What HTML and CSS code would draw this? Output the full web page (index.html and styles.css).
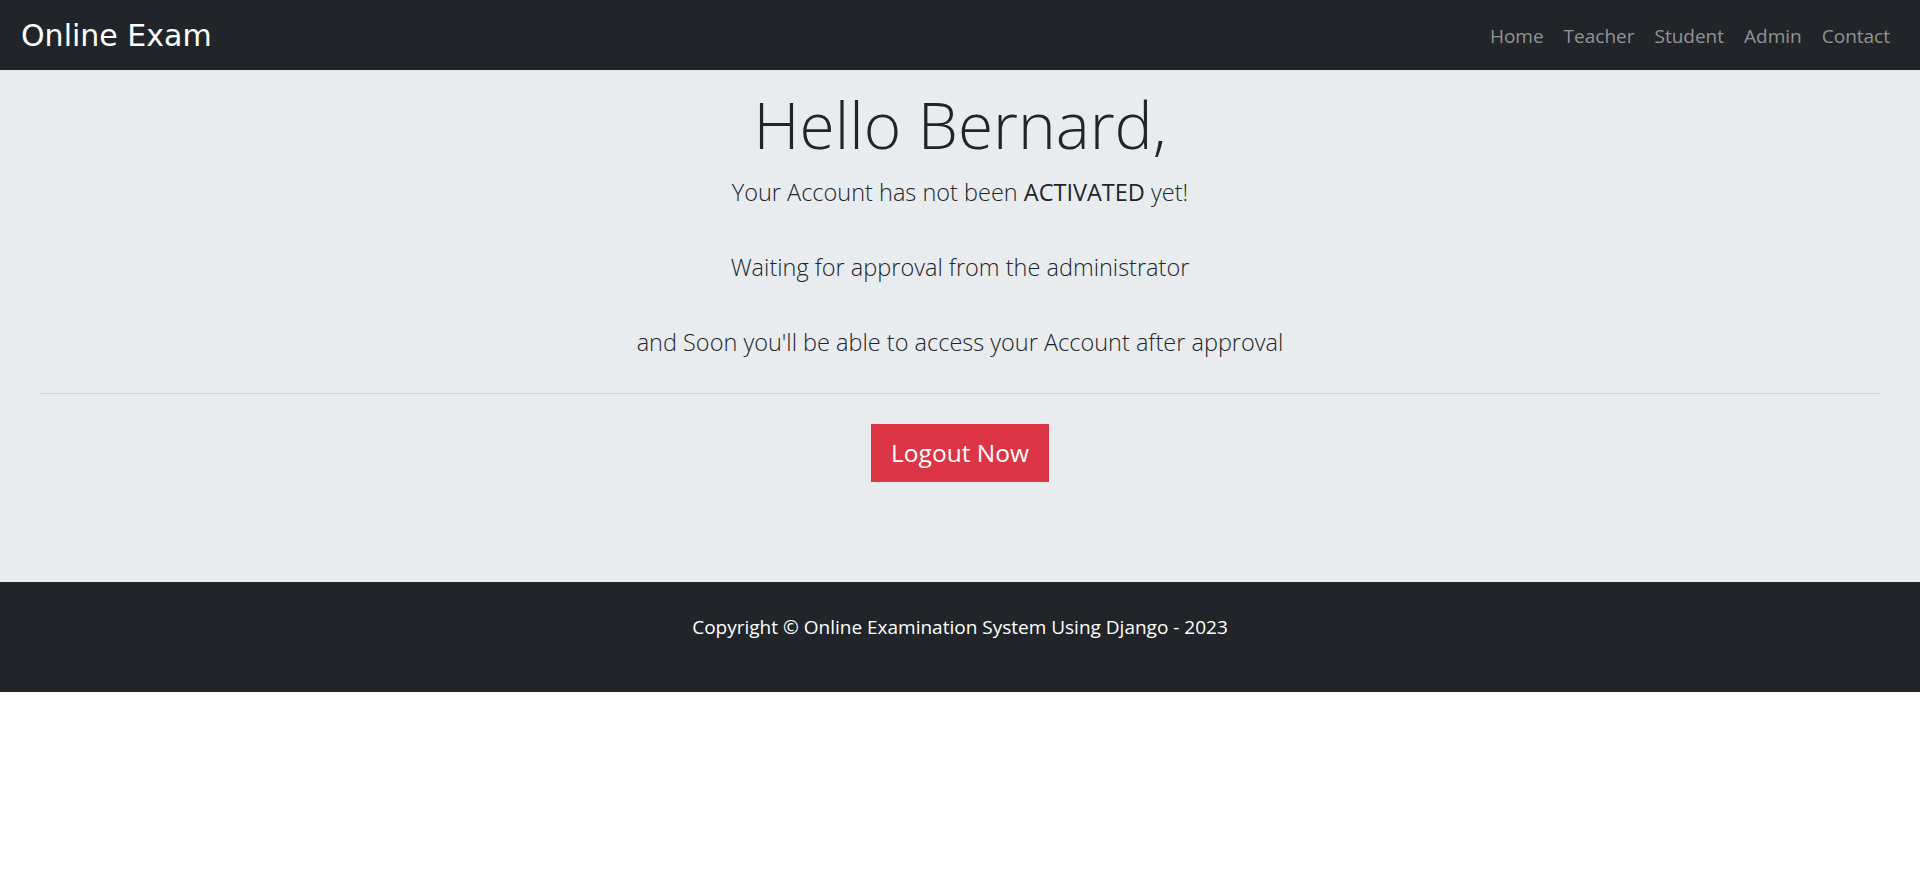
FILE: index.html
```html
<!DOCTYPE html>
<html lang="en">
<head>
<meta charset="utf-8">
<title>Online Exam</title>
<link rel="stylesheet" href="styles.css">
</head>
<body>
<nav class="navbar">
  <a class="brand" href="#">Online Exam</a>
  <ul class="nav-links">
    <li><a href="#">Home</a></li>
    <li><a href="#">Teacher</a></li>
    <li><a href="#">Student</a></li>
    <li><a href="#">Admin</a></li>
    <li><a href="#">Contact</a></li>
  </ul>
</nav>
<div class="jumbotron">
  <h1 class="display">Hello Bernard,</h1>
  <p class="lead">Your Account has not been <b>ACTIVATED</b> yet!<br><br>Waiting for approval from the administrator<br><br>and Soon you'll be able to access your Account after approval</p>
  <hr class="divider">
  <p class="lead action"><a class="btn-danger" href="#">Logout Now</a></p>
</div>
<footer class="footer">
  <p class="copyright">Copyright © Online Examination System Using Django - 2023</p>
</footer>
</body>
</html>
```
FILE: styles.css
```css
html, body {
  margin: 0;
  padding: 0;
  background: #fff;
}
body {
  font-family: "Open Sans", "Noto Sans", sans-serif;
  font-size: 20px;
  line-height: 1.5;
  color: #212529;
}
.navbar {
  display: flex;
  justify-content: space-between;
  align-items: center;
  height: 70px;
  padding: 0 20px 0 21px;
  background: #212529;
  box-sizing: border-box;
}
.brand {
  font-family: "DejaVu Sans", sans-serif;
  font-size: 30px;
  line-height: 36px;
  color: #fff;
  text-decoration: none;
  padding-top: 2px;
}
.nav-links {
  display: flex;
  list-style: none;
  margin: 0;
  padding: 0;
}
.nav-links a {
  display: block;
  padding: 2px 10px 0;
  font-size: 19px;
  line-height: 30px;
  color: rgba(255, 255, 255, 0.5);
  text-decoration: none;
}
.jumbotron {
  background: #e9ecef;
  padding: 13px 40px 80px;
  text-align: center;
}
.display {
  margin: 0 0 7px;
  font-size: 64px;
  font-weight: 300;
  line-height: 84px;
}
.lead {
  margin: 0;
  font-size: 23.5px;
  font-weight: 300;
  line-height: 37.5px;
}
.lead b {
  font-weight: 400;
}
.divider {
  margin: 31px 0 30px;
  border: 0;
  border-top: 1px solid rgba(0, 0, 0, 0.1);
}
.action {
  margin-bottom: 20px;
  line-height: 58px;
}
.btn-danger {
  display: inline-block;
  padding: 10px 20px;
  background: #dc3545;
  color: #fff;
  font-weight: 400;
  font-size: 24.5px;
  line-height: 38px;
  text-decoration: none;
  vertical-align: top;
}
.footer {
  background: #212529;
  padding: 30px 0;
  text-align: center;
}
.copyright {
  margin: 0 0 20px;
  color: #fff;
  font-size: 19px;
  line-height: 30px;
}
```
